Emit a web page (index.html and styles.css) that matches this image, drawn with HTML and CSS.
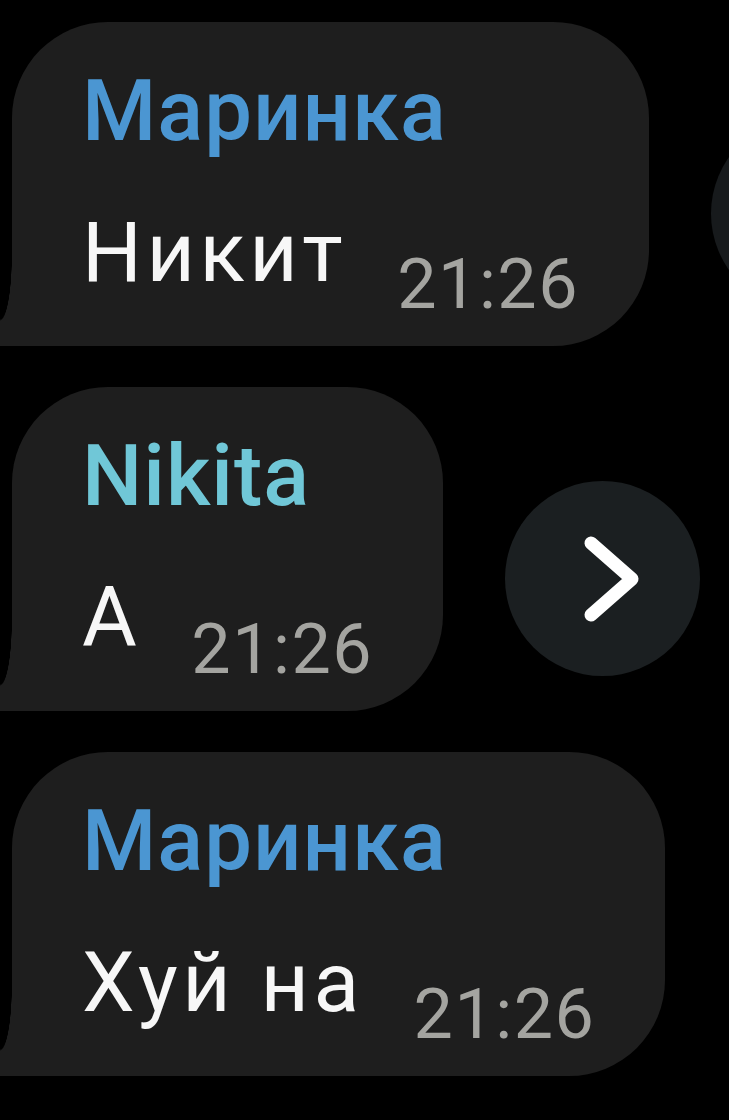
FILE: index.html
```html
<!DOCTYPE html>
<html lang="ru">
<head>
<meta charset="utf-8">
<title>Chat</title>
<link rel="stylesheet" href="styles.css">
</head>
<body>
<main class="chat">
  <div class="row">
    <div class="bubble">
      <div class="name name-blue">Маринка</div>
      <div class="msg">Никит<span class="time">21:26</span></div>
    </div>
    <div class="round round-faint"></div>
  </div>
  <div class="row">
    <div class="bubble">
      <div class="name name-teal">Nikita</div>
      <div class="msg">А<span class="time">21:26</span></div>
    </div>
    <div class="round">
      <svg class="chev" viewBox="0 0 195 195" width="195" height="195" aria-hidden="true">
        <polyline points="86,62 127,98 86,134" fill="none" stroke="#ffffff" stroke-width="13" stroke-linecap="round" stroke-linejoin="round"/>
      </svg>
    </div>
  </div>
  <div class="row">
    <div class="bubble">
      <div class="name name-blue">Маринка</div>
      <div class="msg">Хуй на<span class="time">21:26</span></div>
    </div>
  </div>
</main>
</body>
</html>
```

FILE: styles.css
```css
html, body {
  margin: 0;
  padding: 0;
  background: #000;
}
body {
  width: 729px;
  height: 1120px;
  overflow: hidden;
  font-family: Roboto, "Noto Sans", sans-serif;
}
.chat {
  display: flex;
  flex-direction: column;
  gap: 41px;
  padding-top: 22px;
  padding-left: 12px;
}
.row {
  display: flex;
  align-items: flex-end;
  gap: 62px;
}
.bubble {
  position: relative;
  flex-shrink: 0;
  background: #1e1e1e;
  border-radius: 96px 96px 96px 0;
  padding: 40px 70px 44px 70px;
}
.bubble::before {
  content: "";
  position: absolute;
  left: -12px;
  bottom: 0;
  width: 12px;
  height: 90px;
  background: radial-gradient(12px 65px at 0 0, transparent 97%, #1e1e1e 100%);
}
.name {
  font-size: 85px;
  font-weight: 500;
  line-height: 98px;
  letter-spacing: 1px;
  margin-bottom: 44px;
  white-space: nowrap;
}
.name-blue { color: #4b96d2; }
.name-teal { color: #70c7d7; }
.msg {
  font-size: 84px;
  line-height: 98px;
  letter-spacing: 4.5px;
  color: #f7f7f7;
  white-space: nowrap;
}
.time {
  font-size: 70px;
  line-height: 0;
  letter-spacing: 1.5px;
  color: #a4a4a0;
  margin-left: 50px;
  vertical-align: -27px;
}
.round {
  flex-shrink: 0;
  width: 195px;
  height: 195px;
  border-radius: 50%;
  background: #1b1f21;
  margin-bottom: 35px;
}
.round-faint {
  background: #171a1c;
}
.chev {
  display: block;
}
```
